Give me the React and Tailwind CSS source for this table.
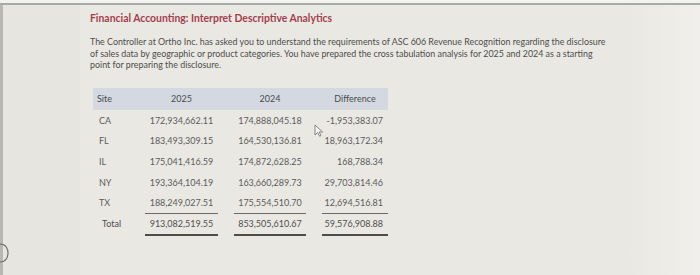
import React from 'react';

const rows = [
    { site: 'CA', y25: '172,934,662.11', y24: '174,888,045.18', diff: '-1,953,383.07', h: 'h-[21px]' },
    { site: 'FL', y25: '183,493,309.15', y24: '164,530,136.81', diff: '18,963,172.34', h: 'h-[20px]' },
    { site: 'IL', y25: '175,041,416.59', y24: '174,872,628.25', diff: '168,788.34', h: 'h-[21px]' },
    { site: 'NY', y25: '193,364,104.19', y24: '163,660,289.73', diff: '29,703,814.46', h: 'h-[21px]' },
    { site: 'TX', y25: '188,249,027.51', y24: '175,554,510.70', diff: '12,694,516.81', h: 'h-[20px]' },
];

const grid = 'grid grid-cols-[36px_73px_72px_66px] gap-x-4';

const Cursor = () => (
    <svg className="absolute left-[314px] top-[124px]" width="10" height="13" viewBox="0 0 10 13">
        <path d="M1 1 L1 11 L3.6 8.6 L5.6 12.2 L7 11.5 L5.1 8 L8.6 8 Z" fill="#f4f4f2" stroke="#7a7a7a" strokeWidth="0.9" strokeLinejoin="round" />
    </svg>
);

const App = () => {
    return (
        <div className="relative w-[700px] h-[275px] overflow-hidden bg-[#e4e3dd] font-['Lato','Liberation_Sans',sans-serif]">
            <div className="h-[3px] bg-[#f2f2f0]" />
            <div className="h-[2px] bg-[#a9a9a6]" />
            <div className="flex h-[270px]">
                <div className="w-[3px] bg-[#b8b7b2]" />
                <div className="w-[77px] bg-[#e6e5df]" />
                <div className="w-[545px] bg-[#e9e8e3] pl-[10px] pt-[6px]">
                    <h1 className="text-[10.4px] leading-[14px] font-bold text-[#a3404e]">
                        Financial Accounting: Interpret Descriptive Analytics
                    </h1>
                    <p className="mt-[11px] text-[8.9px] leading-[11.7px] text-[#4e4e4c] whitespace-nowrap">
                        The Controller at Ortho Inc. has asked you to understand the requirements of ASC 606 Revenue Recognition regarding the disclosure
                        <br />
                        of sales data by geographic or product categories. You have prepared the cross tabulation analysis for 2025 and 2024 as a starting
                        <br />
                        point for preparing the disclosure.
                    </p>

                    <div className="mt-[17px] ml-[3px] w-[295px] text-[9px] text-[#5c5c5a]">
                        <div className={`${grid} h-[22px] items-center bg-[#d4d9e1] text-[#4a4c50]`}>
                            <div className="pl-[4px]">Site</div>
                            <div className="text-center">2025</div>
                            <div className="text-center">2024</div>
                            <div className="text-center">Difference</div>
                        </div>
                        {rows.map((r) => (
                            <div key={r.site} className={`${grid} ${r.h} items-center`}>
                                <div className="pl-[6px]">{r.site}</div>
                                <div className="text-center">{r.y25}</div>
                                <div className="text-center">{r.y24}</div>
                                <div className="text-right pr-[5px]">{r.diff}</div>
                            </div>
                        ))}
                        <div className={grid}>
                            <div />
                            <div className="h-px bg-[#6a6a68]" />
                            <div className="h-px bg-[#6a6a68]" />
                            <div className="h-px bg-[#6a6a68]" />
                        </div>
                        <div className={`${grid} h-[20px] items-center text-[#4f4f4d]`}>
                            <div className="pl-[9px]">Total</div>
                            <div className="text-center">913,082,519.55</div>
                            <div className="text-center">853,505,610.67</div>
                            <div className="text-right pr-[5px]">59,576,908.88</div>
                        </div>
                        <div className={grid}>
                            <div />
                            <div className="h-[2px] bg-[#4d4d4b]" />
                            <div className="h-[2px] bg-[#4d4d4b]" />
                            <div className="h-[2px] bg-[#4d4d4b]" />
                        </div>
                    </div>
                </div>
                <div className="flex-1 bg-gradient-to-r from-[#e9e8e3] to-[#f0efeb]" />
            </div>
            <Cursor />
            <svg className="absolute left-0 top-[242px]" width="10" height="22" viewBox="0 0 10 22">
                <path d="M0 2 C6 2 8 7 8 11 C8 15 6 20 0 20" fill="none" stroke="#6e6e6c" strokeWidth="1.2" />
            </svg>
        </div>
    );
};

export default App;
